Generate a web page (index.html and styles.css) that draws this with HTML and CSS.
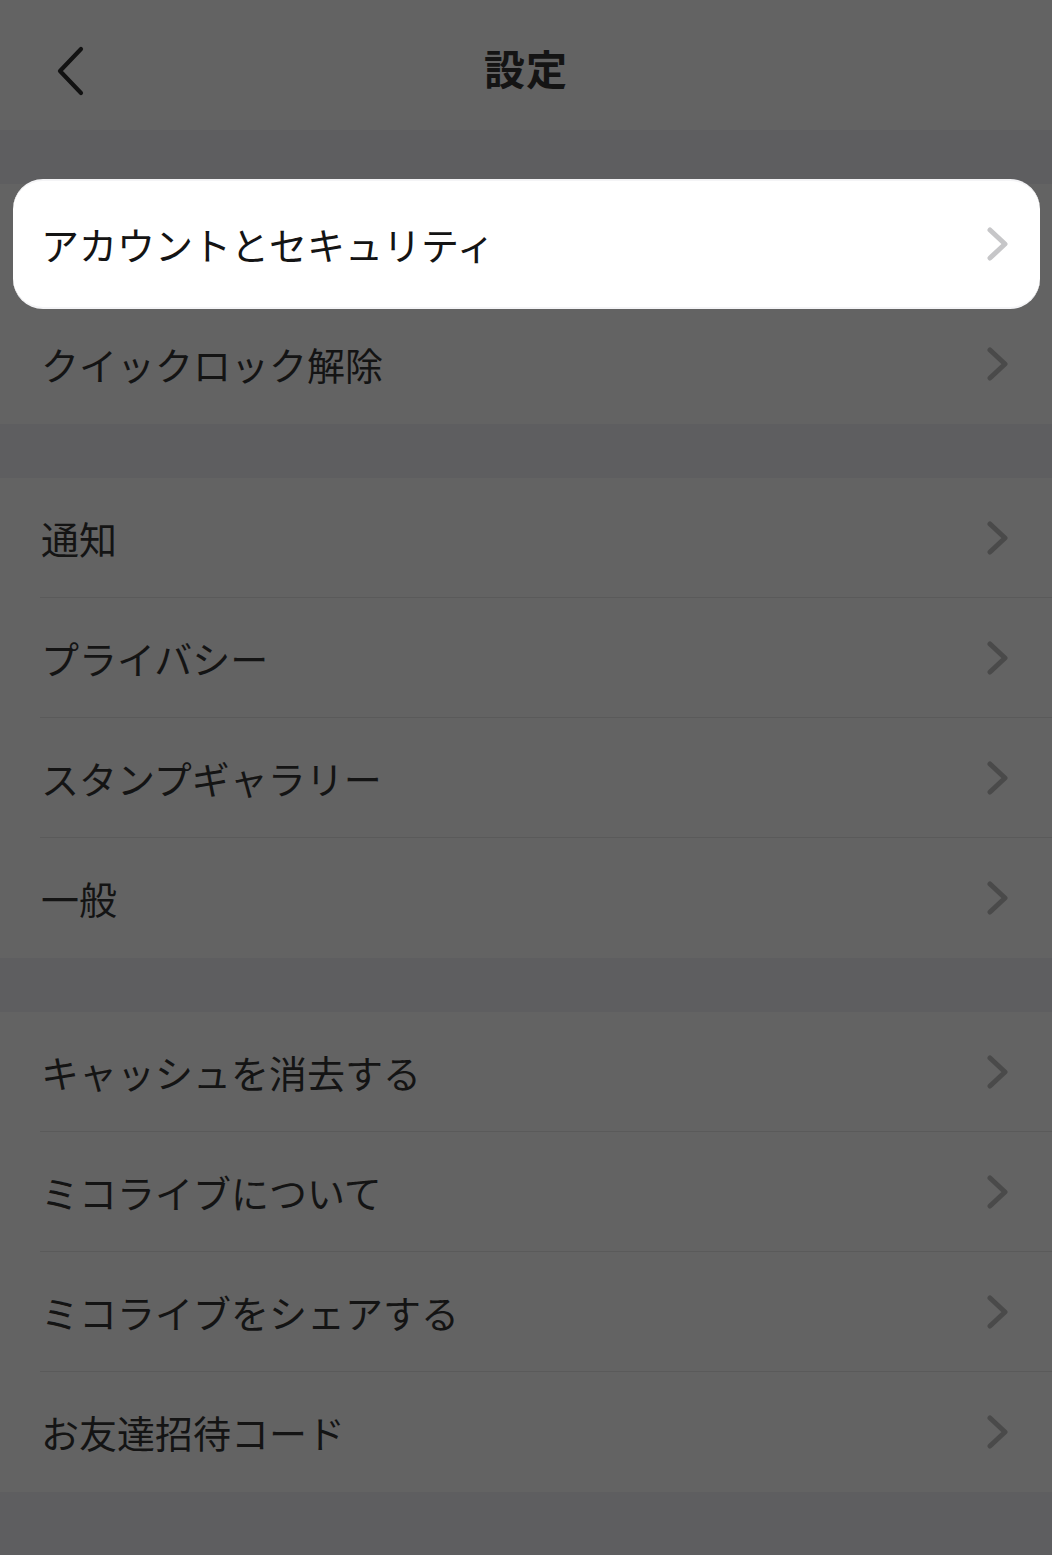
FILE: index.html
```html
<!DOCTYPE html>
<html lang="ja">
<head>
<meta charset="utf-8">
<title>設定</title>
<link rel="stylesheet" href="styles.css">
</head>
<body>
<div class="screen">
  <header class="topbar">
    <span class="back">
      <svg width="34" height="50" viewBox="0 0 34 50"><path d="M29 3 L8 25 L29 47" fill="none" stroke="#121212" stroke-width="4.2" stroke-linecap="round" stroke-linejoin="round"/></svg>
    </span>
    <h1 class="title">設定</h1>
  </header>

  <div class="gap"></div>
  <section class="group">
    <div class="row row-focus">
      <span class="label">アカウントとセキュリティ</span>
      <svg class="chev" width="22" height="34" viewBox="0 0 22 34"><path d="M3 3 L18 17 L3 31" fill="none" stroke="#c6c6c8" stroke-width="5" stroke-linecap="round" stroke-linejoin="round"/></svg>
    </div>
    <div class="row">
      <span class="label">クイックロック解除</span>
      <svg class="chev" width="22" height="34" viewBox="0 0 22 34"><path d="M3 3 L18 17 L3 31" fill="none" stroke="#4a4a4a" stroke-width="5" stroke-linecap="round" stroke-linejoin="round"/></svg>
    </div>
  </section>

  <div class="gap"></div>
  <section class="group">
    <div class="row line">
      <span class="label">通知</span>
      <svg class="chev" width="22" height="34" viewBox="0 0 22 34"><path d="M3 3 L18 17 L3 31" fill="none" stroke="#4a4a4a" stroke-width="5" stroke-linecap="round" stroke-linejoin="round"/></svg>
    </div>
    <div class="row line">
      <span class="label">プライバシー</span>
      <svg class="chev" width="22" height="34" viewBox="0 0 22 34"><path d="M3 3 L18 17 L3 31" fill="none" stroke="#4a4a4a" stroke-width="5" stroke-linecap="round" stroke-linejoin="round"/></svg>
    </div>
    <div class="row line">
      <span class="label">スタンプギャラリー</span>
      <svg class="chev" width="22" height="34" viewBox="0 0 22 34"><path d="M3 3 L18 17 L3 31" fill="none" stroke="#4a4a4a" stroke-width="5" stroke-linecap="round" stroke-linejoin="round"/></svg>
    </div>
    <div class="row">
      <span class="label">一般</span>
      <svg class="chev" width="22" height="34" viewBox="0 0 22 34"><path d="M3 3 L18 17 L3 31" fill="none" stroke="#4a4a4a" stroke-width="5" stroke-linecap="round" stroke-linejoin="round"/></svg>
    </div>
  </section>

  <div class="gap"></div>
  <section class="group">
    <div class="row line">
      <span class="label">キャッシュを消去する</span>
      <svg class="chev" width="22" height="34" viewBox="0 0 22 34"><path d="M3 3 L18 17 L3 31" fill="none" stroke="#4a4a4a" stroke-width="5" stroke-linecap="round" stroke-linejoin="round"/></svg>
    </div>
    <div class="row line">
      <span class="label">ミコライブについて</span>
      <svg class="chev" width="22" height="34" viewBox="0 0 22 34"><path d="M3 3 L18 17 L3 31" fill="none" stroke="#4a4a4a" stroke-width="5" stroke-linecap="round" stroke-linejoin="round"/></svg>
    </div>
    <div class="row line">
      <span class="label">ミコライブをシェアする</span>
      <svg class="chev" width="22" height="34" viewBox="0 0 22 34"><path d="M3 3 L18 17 L3 31" fill="none" stroke="#4a4a4a" stroke-width="5" stroke-linecap="round" stroke-linejoin="round"/></svg>
    </div>
    <div class="row">
      <span class="label">お友達招待コード</span>
      <svg class="chev" width="22" height="34" viewBox="0 0 22 34"><path d="M3 3 L18 17 L3 31" fill="none" stroke="#4a4a4a" stroke-width="5" stroke-linecap="round" stroke-linejoin="round"/></svg>
    </div>
  </section>
  <div class="tail"></div>
</div>
</body>
</html>
```

FILE: styles.css
```css
* { box-sizing: border-box; }
html, body {
  margin: 0;
  padding: 0;
  background: #5e5e60;
}
body {
  font-family: "Noto Sans CJK JP", "Noto Sans", sans-serif;
  color: #141414;
}
.screen {
  width: 1052px;
  min-height: 1555px;
  display: flex;
  flex-direction: column;
  background: #5e5e60;
}
.topbar {
  height: 130px;
  background: #636363;
  display: flex;
  align-items: center;
  justify-content: center;
  position: relative;
}
.back {
  position: absolute;
  left: 52px;
  top: 46px;
  display: block;
  line-height: 0;
}
.title {
  margin: 0;
  font-size: 41px;
  font-weight: 700;
  color: #141414;
  letter-spacing: 1px;
  line-height: 1;
  padding-top: 4px;
}
.gap {
  height: 54px;
  background: #5e5e60;
}
.group {
  background: #636363;
  display: flex;
  flex-direction: column;
}
.row {
  height: 120px;
  display: flex;
  align-items: center;
  justify-content: space-between;
  padding: 0 43px 0 41px;
  position: relative;
}
.row.line::after {
  content: "";
  position: absolute;
  left: 40px;
  right: 0;
  bottom: 0;
  height: 1px;
  background: #5a5a5a;
}
.label {
  font-size: 38px;
  line-height: 1;
  letter-spacing: 0;
  padding-bottom: 1px;
}
.chev {
  display: block;
}
.row-focus {
  height: 130px;
  margin: -5px 12px -5px 13px;
  padding: 0 31px 0 28px;
  background: #ffffff;
  border-radius: 30px;
  border-top: 2px solid #f4f4f6;
  border-bottom: 2px solid #f4f4f6;
  z-index: 1;
}
.tail {
  flex: 1;
  background: #5e5e60;
}
```
